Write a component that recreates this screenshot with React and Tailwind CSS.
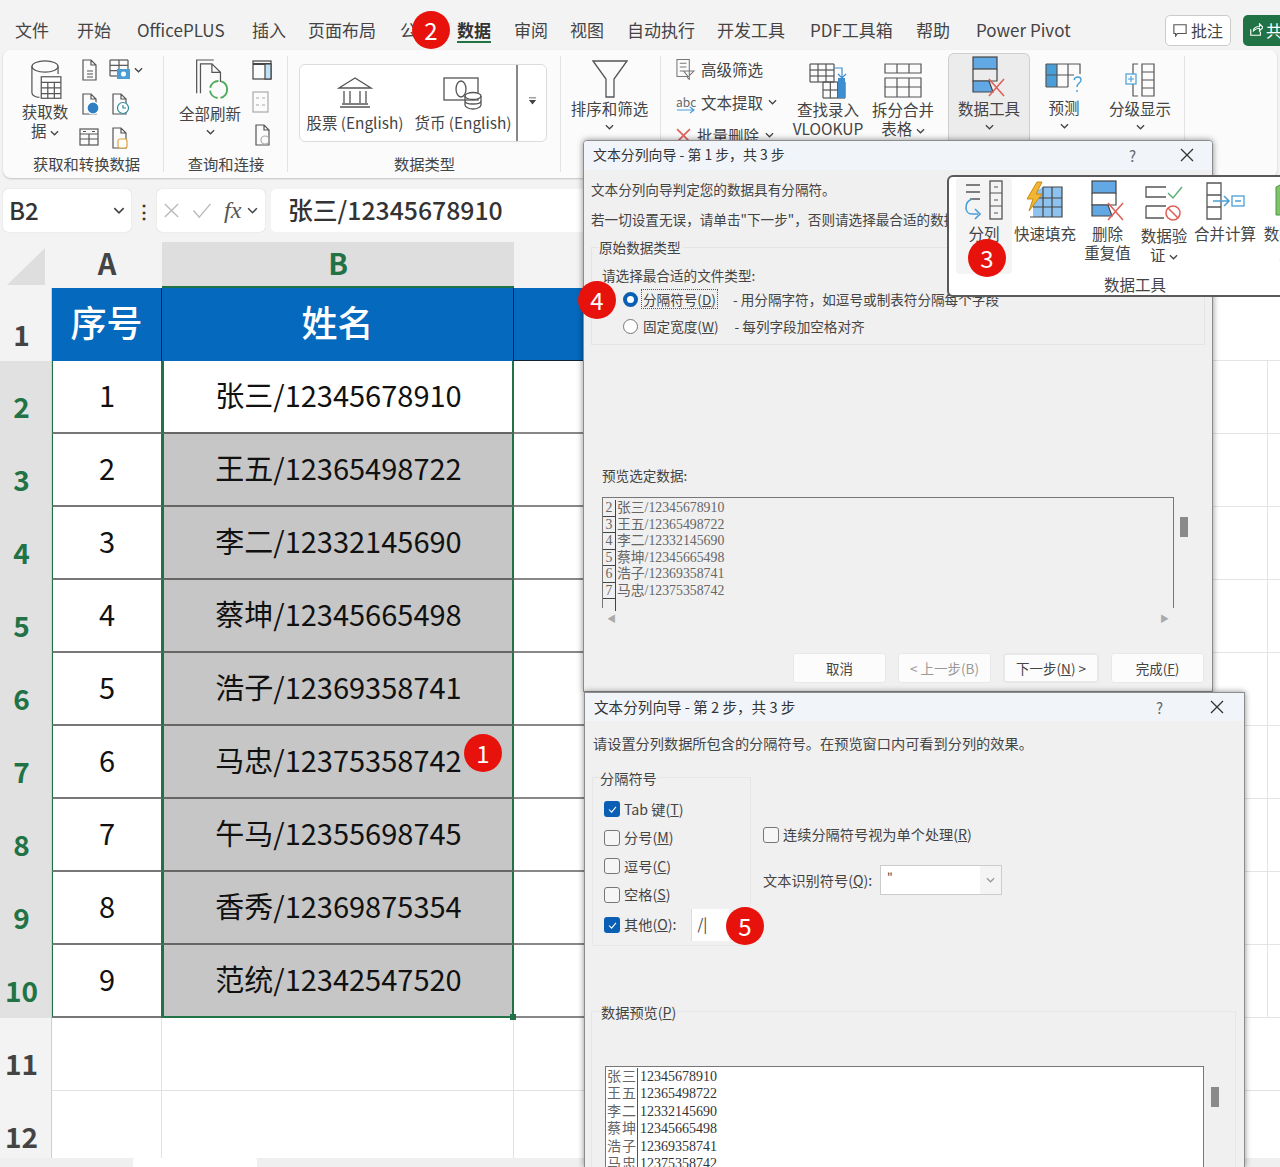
import React from "react";

const tabs = [
  ["文件", "w-[62px]"],
  ["开始", "w-[60px]"],
  ["OfficePLUS", "w-[115px]"],
  ["插入", "w-[56px]"],
  ["页面布局", "w-[92px]"],
  ["公式", "w-[57px]"],
  ["数据", "w-[57px]"],
  ["审阅", "w-[56px]"],
  ["视图", "w-[57px]"],
  ["自动执行", "w-[90px]"],
  ["开发工具", "w-[93px]"],
  ["PDF工具箱", "w-[106px]"],
  ["帮助", "w-[60px]"],
  ["Power Pivot", "w-[110px]"],
];

const people = [
  "张三/12345678910",
  "王五/12365498722",
  "李二/12332145690",
  "蔡坤/12345665498",
  "浩子/12369358741",
  "马忠/12375358742",
  "午马/12355698745",
  "香秀/12369875354",
  "范统/12342547520",
];

const Chev = ({ className = "" }) => (
  <svg viewBox="0 0 10 6" className={`w-[9px] h-[6px] inline-block ${className}`} fill="none" stroke="#444" strokeWidth="1.4">
    <path d="M1 1l4 4 4-4" />
  </svg>
);

const Badge = ({ n, className }) => (
  <div className={`absolute z-30 w-[38px] h-[38px] rounded-full bg-[#e8120c] text-white text-[24px] flex items-center justify-center ${className}`}>
    {n}
  </div>
);

const Doc = ({ children, size = 22 }) => (
  <svg viewBox="0 0 20 22" width={size} height={size} fill="none" stroke="#555" strokeWidth="1.2">
    <path d="M3 1h8l5 5v15H3z M11 1v5h5" />
    {children}
  </svg>
);

const CacheGrid = ({ x, y, w, h, cols, rows, stroke = "#555" }) => {
  const lines = [];
  for (let i = 0; i <= cols; i++) lines.push(<path key={`c${i}`} d={`M${x + (w * i) / cols} ${y}v${h}`} />);
  for (let i = 0; i <= rows; i++) lines.push(<path key={`r${i}`} d={`M${x} ${y + (h * i) / rows}h${w}`} />);
  return <g stroke={stroke} fill="none" strokeWidth="1.2">{lines}</g>;
};

const DeleteIcon = ({ w = 36, h = 42 }) => (
  <svg viewBox="0 0 36 42" width={w} height={h} fill="none">
    <rect x="2" y="1" width="24" height="12" fill="#62a8e5" stroke="#444" strokeWidth="1.2" />
    <path d="M2 13v12h24V13" stroke="#444" strokeWidth="1.2" />
    <path d="M2 25h16l4 11H2z" fill="#62a8e5" stroke="#444" strokeWidth="1.2" />
    <path d="M18 40L33 23M18 23l15 17" stroke="#e0605a" strokeWidth="1.6" />
  </svg>
);

const Group = ({ className = "", caption, captionClass = "", children, line = true }) => (
  <div className={`relative h-full shrink-0 flex flex-col ${className}`}>
    <div className="flex-1 min-h-0">{children}</div>
    {caption && <div className={`h-[27px] text-center text-[15.3px] leading-[24px] ${captionClass}`}>{caption}</div>}
    {line && <div className="absolute right-0 top-[6px] bottom-[6px] w-px bg-[#e3e3e3]" />}
  </div>
);

const BigTool = ({ icon, label, more = true, className = "" }) => (
  <div className={`flex flex-col items-center text-[15.5px] leading-[19px] ${className}`}>
    <div className="h-[46px] flex items-end justify-center">{icon}</div>
    <div className="mt-[1px] text-center whitespace-nowrap">{label}</div>
    {more && <Chev className="mt-[6px]" />}
  </div>
);

const Ribbon = () => (
  <div className="mx-[3px] h-[128px] rounded-[8px] bg-[#fbfbfb] shadow-[0_1px_2px_rgba(0,0,0,0.2)] flex text-[#444]">
    <Group className="w-[161px]" caption="获取和转换数据" captionClass="pl-[6px]">
      <div className="flex pt-[9px] pl-[15px]">
        <div className="w-[54px] flex flex-col items-center text-[15.5px] leading-[19px]">
          <svg viewBox="0 0 40 46" width="38" height="43" fill="none" stroke="#555" strokeWidth="1.3">
            <ellipse cx="20" cy="8" rx="14" ry="6" />
            <path d="M6 8v28c0 3 4 5 8 5M34 8v8" />
            <rect x="16" y="19" width="21" height="23" fill="#fff" />
            <path d="M16 25h21M16 31h21M16 37h21M23 25v17M30 25v17" />
          </svg>
          <div className="text-center whitespace-nowrap">获取数<br />据 <Chev /></div>
        </div>
        <div className="ml-[7px] grid grid-cols-[30px_34px] grid-rows-[34px_34px_30px] items-start justify-items-start">
          <Doc><path d="M7 12h6M7 15h6M7 18h6" /></Doc>
          <div className="flex items-center gap-[3px]">
            <svg viewBox="0 0 22 22" width="22" height="22" fill="none">
              <CacheGrid x={1} y={1} w={18} h={16} cols={2} rows={3} />
              <rect x="8" y="10" width="13" height="10" fill="#4a9ed8" />
              <circle cx="14.5" cy="15" r="2.5" fill="#fff" />
            </svg>
            <Chev />
          </div>
          <Doc><circle cx="13" cy="15" r="6" fill="#2f7fc4" stroke="#fff" /></Doc>
          <Doc><circle cx="13" cy="15" r="5.5" fill="#fff" stroke="#2a8a9a" /><path d="M13 12v3h3" stroke="#2a8a9a" /></Doc>
          <svg viewBox="0 0 20 20" width="20" height="20" fill="none" stroke="#555" strokeWidth="1.2">
            <rect x="1" y="2" width="18" height="16" />
            <path d="M1 7h18M1 12h18M10 7v11" />
            <path d="M4 4.5h3M13 4.5h3" />
          </svg>
          <Doc><rect x="8" y="12" width="9" height="9" rx="2" fill="#fff" stroke="#e0a23c" /></Doc>
        </div>
      </div>
    </Group>
    <Group className="w-[124px]" caption="查询和连接">
      <div className="flex pt-[9px] pl-[14px]">
        <div className="w-[64px] flex flex-col items-center text-[15.5px] leading-[20px]">
          <svg viewBox="0 0 42 44" width="40" height="42" fill="none" stroke="#555" strokeWidth="1.3">
            <path d="M7 36V1h18" />
            <path d="M11 36V5h12l9 9v10M23 5v9h9" />
            <circle cx="30" cy="32" r="9" stroke="#4caa5a" strokeWidth="2" strokeDasharray="12 3" />
          </svg>
          <div className="mt-[2px] whitespace-nowrap">全部刷新</div>
          <Chev className="mt-[6px]" />
        </div>
        <div className="ml-[10px] flex flex-col gap-[11px] pt-[1px]">
          <svg viewBox="0 0 20 20" width="20" height="20" fill="none" stroke="#444" strokeWidth="1.2">
            <rect x="1" y="1" width="18" height="18" />
            <path d="M1 4h18" strokeWidth="2" />
            <rect x="13" y="4" width="6" height="15" fill="#bfe0f5" />
          </svg>
          <svg viewBox="0 0 18 22" width="18" height="22" fill="none" stroke="#aaa" strokeWidth="1.2">
            <rect x="1" y="1" width="15" height="20" />
            <path d="M4 7h3M4 14h3M10 7h3M10 14h3" />
          </svg>
          <Doc><circle cx="12" cy="16" r="4" stroke="#aaa" /></Doc>
        </div>
      </div>
    </Group>
    <Group className="w-[273px]" caption="数据类型">
      <div className="mt-[14px] ml-[11px] w-[248px] h-[78px] rounded-[6px] border border-[#dcdcdc] bg-white flex text-[15.4px] leading-[20px]">
        <div className="w-[110px] shrink-0 flex flex-col items-center pt-[12px]">
          <svg viewBox="0 0 36 32" width="36" height="32" fill="none" stroke="#555" strokeWidth="1.3">
            <path d="M18 1L2 11h32z" />
            <path d="M7 14v12M13 14v12M23 14v12M29 14v12M3 30h30M5 27h26" />
          </svg>
          <span className="mt-[3px] whitespace-nowrap">股票 (English)</span>
        </div>
        <div className="w-[106px] shrink-0 flex flex-col items-center pt-[11px]">
          <svg viewBox="0 0 40 34" width="40" height="34" fill="none" stroke="#555" strokeWidth="1.3">
            <rect x="1" y="2" width="34" height="22" />
            <ellipse cx="18" cy="13" rx="5" ry="8" />
            <ellipse cx="30" cy="20" rx="8" ry="3.5" fill="#fff" />
            <path d="M22 20v9c0 2 4 4 8 4s8-2 8-4v-9M22 25c0 2 4 3 8 3s8-1 8-3" />
          </svg>
          <span className="mt-[2px] whitespace-nowrap">货币 (English)</span>
        </div>
        <div className="flex-1 border-l-2 border-[#888] flex items-center justify-center pb-[4px]">
          <svg viewBox="0 0 10 8" width="9" height="8" fill="#444"><path d="M1 0h8v1H1zM1 3h8L5 8z" /></svg>
        </div>
      </div>
    </Group>
    <Group className="w-[100px]">
      <BigTool
        className="pt-[2px] mr-[3px]"
        label="排序和筛选"
        icon={
          <svg viewBox="0 0 36 38" width="36" height="38" fill="none" stroke="#555" strokeWidth="1.3">
            <path d="M1 1h34L22 19v18h-8V19z" />
          </svg>
        }
      />
    </Group>
    <Group className="w-[130px]" line={false}>
      <div className="pt-[8px] pl-[15px] flex flex-col gap-[11px] text-[15.5px] leading-[22px]">
        <div className="flex items-center gap-[6px]">
          <svg viewBox="0 0 20 22" width="19" height="22" fill="none" stroke="#777" strokeWidth="1.1">
            <path d="M1 1h13v18H1zM4 5h7M4 9h7M4 13h4M8 13h11l-5 5v4l-2-2v-2z" />
          </svg>
          高级筛选
        </div>
        <div className="flex items-center gap-[5px]">
          <span className="relative w-[20px] text-[12px] leading-[14px] text-[#666]">
            abc
            <svg viewBox="0 0 20 8" width="20" height="8" className="absolute left-0 top-[11px]" fill="none" stroke="#4a9ed8" strokeWidth="1.2"><path d="M1 4h17M14 1l4 3-4 3" /></svg>
          </span>
          文本提取 <Chev />
        </div>
        <div className="flex items-center gap-[6px]">
          <svg viewBox="0 0 14 14" width="15" height="15" stroke="#e0605a" strokeWidth="1.5"><path d="M1 1l12 12M13 1L1 13" /></svg>
          批量删除 <Chev />
        </div>
      </div>
    </Group>
    <Group className="w-[74px]" line={false}>
      <BigTool
        className="pt-[3px]"
        more={false}
        label={<>查找录入<br />VLOOKUP</>}
        icon={
          <svg viewBox="0 0 38 36" width="38" height="36" fill="none">
            <CacheGrid x={1} y={1} w={24} h={18} cols={3} rows={3} />
            <CacheGrid x={14} y={19} w={22} h={16} cols={3} rows={2} />
            <rect x="29" y="15" width="7" height="20" fill="#3d8ed0" />
            <path d="M25 5h8v10M29 11l4 4 4-4" stroke="#3d8ed0" strokeWidth="1.2" />
          </svg>
        }
      />
    </Group>
    <Group className="w-[76px] mr-[7px]" line={false}>
      <BigTool
        className="pt-[3px]"
        more={false}
        label={<>拆分合并<br />表格 <Chev /></>}
        icon={
          <svg viewBox="0 0 38 36" width="38" height="36" fill="none" stroke="#555" strokeWidth="1.2">
            <path d="M1 1h36v9H1zM13 1v9M25 1v9M1 15h36v19H1zM1 24h36M13 15v19M25 15v19" />
          </svg>
        }
      />
    </Group>
    <Group className="w-[82px]" line={false}>
      <div className="h-[88px] mt-[3px] rounded-t-[6px] bg-[#ececec] border border-b-0 border-[#cfcfcf]">
        <BigTool className="-mt-[2px]" label="数据工具" icon={<DeleteIcon />} />
      </div>
    </Group>
    <Group className="w-[68px]" line={false}>
      <BigTool
        className="pt-[2px] mt-[-1px]"
        label="预测"
        icon={
          <svg viewBox="0 0 38 36" width="38" height="36" fill="none">
            <rect x="1" y="3" width="11" height="11" fill="#4a9ed8" />
            <rect x="1" y="14" width="11" height="12" fill="#4a9ed8" />
            <path d="M1 3h34v10M1 14h28M1 26h22M12 3v23M23 3v23M1 3v23" stroke="#555" strokeWidth="1.2" />
            <path d="M29 19c1-4 7-4 7 0 0 3-4 3-4 7M32 29v2" stroke="#4a9ed8" strokeWidth="1.4" />
          </svg>
        }
      />
    </Group>
    <Group className="w-[87px]">
      <BigTool
        className="pt-[2px] pr-[3px]"
        label="分级显示"
        icon={
          <svg viewBox="0 0 32 36" width="32" height="36" fill="none" stroke="#555" strokeWidth="1.2">
            <path d="M18 2h12v32H18zM18 10h12M18 18h12M18 26h12M14 2H9v10M14 34H9V22" />
            <rect x="2" y="12" width="10" height="10" stroke="#4a9ed8" />
            <path d="M4 17h6M7 14v6" stroke="#4a9ed8" />
          </svg>
        }
      />
    </Group>
  </div>
);

const FormulaBar = () => (
  <div className="mt-[10px] h-[44px] flex items-center pl-[3px] text-[#333]">
    <div className="w-[128px] h-[43px] rounded-[5px] bg-white flex items-center justify-between px-[6px] pr-[5px] shadow-[0_0_1px_rgba(0,0,0,0.25)]">
      <span className="text-[24px] font-medium">B2</span>
      <Chev className="w-[12px] h-[7px] mr-[1px]" />
    </div>
    <span className="w-[26px] text-center text-[18px] font-bold leading-none">⋮</span>
    <div className="w-[108px] h-[43px] rounded-[5px] bg-white flex items-center pl-[6px] gap-[11px] shadow-[0_0_1px_rgba(0,0,0,0.25)]">
      <svg viewBox="0 0 18 18" width="17" height="17" stroke="#bbb" strokeWidth="1.5"><path d="M2 2l14 14M16 2L2 16" /></svg>
      <svg viewBox="0 0 20 18" width="22" height="17" fill="none" stroke="#bbb" strokeWidth="1.5"><path d="M1 9l6 7L19 2" /></svg>
      <span className="font-['Liberation_Serif',serif] italic text-[24px] leading-none text-[#555]">fx</span>
      <Chev className="w-[11px] h-[7px] -ml-[5px]" />
    </div>
    <div className="ml-[6px] flex-1 h-[43px] rounded-[5px] bg-white pl-[17px] text-[24.8px] font-medium leading-[41px]">
      张三/12345678910
    </div>
  </div>
);

const RowHead = ({ n, active, className = "pb-[8px]" }) => (
  <div className={`flex items-end justify-center pr-[8px] text-[28px] leading-[40px] font-semibold border-r border-[#cfcfcf] ${className} ${active ? "bg-[#e1e1e1] text-[#217346]" : "text-[#444]"}`}>
    {n}
  </div>
);

const Sheet = () => (
  <div className="mt-[10px] grid grid-cols-[52px_110px_352px_286px_468px_12px] grid-rows-[46px_repeat(10,73px)_73px_67px] text-[#111]">
    <div className="flex items-end justify-center pb-[3px]">
      <div className="w-[38px] h-[37px] bg-[#dedede] [clip-path:polygon(100%_0,100%_100%,0_100%)]" />
    </div>
    <div className="text-[29px] font-semibold text-[#444] text-center leading-[40px]">A</div>
    <div className="text-[29px] font-semibold text-[#217346] text-center leading-[40px] bg-[#dedede] border-b-2 border-[#217346]">B</div>
    <div className="col-span-3" />

    <RowHead n={1} className="pb-[7px]" />
    <div className="bg-[#0569bd] text-white text-[36px] font-medium text-center leading-[66px] border-r border-[#123]">序号</div>
    <div className="bg-[#0569bd] text-white text-[36px] font-medium text-center leading-[66px] border-r border-[#123]">姓名</div>
    <div className="bg-[#0569bd] border-b border-[#123]" />
    <div className="border-b border-[#e4e4e4] col-span-2 bg-white" />

    {people.map((name, i) => (
      <React.Fragment key={name}>
        <RowHead n={i + 2} active />
        <div className="bg-white border-b-2 border-x border-x-[#217346] border-b-[#777] text-[29px] text-center leading-[66px]">{i + 1}</div>
        <div className={`relative pl-[1px] border-x-2 border-[#217346] border-b-2 ${i === 8 ? "border-b-[#217346]" : "border-b-[#666]"} ${i === 0 ? "bg-white" : "bg-[#c6c6c6]"} text-[29px] text-center leading-[66px]`}>
          {name}
          {i === 8 && <span className="absolute -right-[4px] -bottom-[4px] w-[6px] h-[6px] bg-[#217346]" />}
        </div>
        <div className="bg-white border-b-2 border-[#888]" />
        <div className="bg-white border-b border-[#e4e4e4] border-r" />
        <div className="bg-white border-b border-[#e4e4e4]" />
      </React.Fragment>
    ))}

    <RowHead n={11} />
    <div className="bg-white border-b border-r border-[#e2e2e2]" />
    <div className="bg-white border-b border-r border-[#e2e2e2]" />
    <div className="bg-white border-b border-[#e2e2e2] col-span-2" />
    <div className="bg-white border-b border-[#e2e2e2]" />
    <RowHead n={12} className="pb-[2px]" />
    <div className="bg-white border-r border-[#e2e2e2]" />
    <div className="bg-white border-r border-[#e2e2e2]" />
    <div className="bg-white col-span-3" />
  </div>
);

const DialogTitle = ({ text, gap, className, closeGap }) => (
  <div className={`bg-[#f1f5fa] flex items-center pl-[9px] text-[#333] leading-none ${className}`}>
    <span className="flex-1">{text}</span>
    <span className={`text-[15px] text-[#666] ${gap}`}>?</span>
    <svg viewBox="0 0 14 14" width="14" height="14" className={closeGap} stroke="#333" strokeWidth="1.3"><path d="M1 1l12 12M13 1L1 13" /></svg>
  </div>
);

const DlgBtn = ({ children, className = "" }) => (
  <div className={`h-[30px] rounded-[3px] bg-[#fcfcfc] border border-[#e8e8e8] flex items-center justify-center text-[13.5px] ${className}`}>{children}</div>
);

const previewRows = ["张三/12345678910", "王五/12365498722", "李二/12332145690", "蔡坤/12345665498", "浩子/12369358741", "马忠/12375358742"];

const FirstDialog = () => (
  <div className="absolute z-10 left-[583px] top-[140px] w-[630px] h-[552px] bg-[#f0f0f0] rounded-t-[4px] border border-[#8c8c8c] shadow-[0_0_6px_rgba(0,0,0,0.45)] text-[13.6px] text-[#444] overflow-hidden">
    <DialogTitle text="文本分列向导 - 第 1 步，共 3 步" gap="mr-[44px]" closeGap="mr-[18px]" className="h-[29px] pb-[1px] mb-[2px] text-[13.9px]" />
    <div className="pl-[7px] pt-[7px] leading-[20px]">文本分列向导判定您的数据具有分隔符。</div>
    <div className="pl-[7px] pt-[10px] leading-[20px]">若一切设置无误，请单击"下一步"，否则请选择最合适的数据类型。</div>
    <div className="relative mt-[18px] ml-[7px] w-[614px] h-[98px] border border-[#e4e4e4] pt-[17px] pl-[10px]">
      <span className="absolute left-[7px] -top-[11px] bg-[#f0f0f0] pr-[2px] leading-[20px]">原始数据类型</span>
      <div className="leading-[20px]">请选择最合适的文件类型:</div>
      <div className="flex items-center mt-[4px] ml-[21px] h-[20px]">
        <span className="w-[15px] h-[15px] rounded-full border-[4px] border-[#0a5fb4] bg-white" />
        <span className="ml-[3px] border border-dotted border-[#555] px-[1px] leading-[18px]">分隔符号(<u>D</u>)</span>
        <span className="ml-[15px]">- 用分隔字符，如逗号或制表符分隔每个字段</span>
      </div>
      <div className="flex items-center mt-[7px] ml-[21px] h-[20px]">
        <span className="w-[15px] h-[15px] rounded-full border border-[#777] bg-white" />
        <span className="ml-[4px] px-[1px]">固定宽度(<u>W</u>)</span>
        <span className="ml-[15px]">- 每列字段加空格对齐</span>
      </div>
    </div>
    <div className="mt-[120px] ml-[18px] leading-[20px]">预览选定数据:</div>
    <div className="relative mt-[12px] ml-[18px] w-[572px] h-[111px] border-x border-t border-[#777] font-['Liberation_Serif','Noto_Sans_CJK_SC',serif] text-[13.8px] leading-[16.5px] text-[#666] pt-[2px]">
      {previewRows.map((row, i) => (
        <div key={row} className="flex h-[16.5px]">
          <span className="w-[13px] text-center border-r border-b border-[#444]">{i + 2}</span>
          <span className="pl-[1px]">{row}</span>
        </div>
      ))}
      <div className="w-[13px] h-[12px] border-r border-[#444]" />
      <span className="absolute -right-[15px] top-[19px] w-[8px] h-[20px] bg-[#8a8a8a]" />
    </div>
    <div className="ml-[18px] w-[572px] flex justify-between px-[5px] pt-[4px] text-[9px] text-[#aaa]">
      <span>◀</span>
      <span>▶</span>
    </div>
    <div className="absolute left-[209px] bottom-[8px] flex gap-[12px]">
      <DlgBtn className="w-[93px]">取消</DlgBtn>
      <DlgBtn className="w-[93px] text-[#999]">&lt; 上一步(B)</DlgBtn>
      <DlgBtn className="w-[96px] border-[#6ea3c7] border-2">下一步(<u>N</u>) &gt;</DlgBtn>
      <DlgBtn className="w-[93px]">完成(<u>F</u>)</DlgBtn>
    </div>
  </div>
);

const Check = ({ on }) => (
  <span className={`w-[16px] h-[16px] shrink-0 rounded-[3px] flex items-center justify-center ${on ? "bg-[#0a5fb4]" : "bg-[#f6f6f6] border border-[#777]"}`}>
    {on && (
      <svg viewBox="0 0 10 8" width="9" height="7" fill="none" stroke="#fff" strokeWidth="1.2"><path d="M1 4l3 3 5-6" /></svg>
    )}
  </span>
);

const CheckRow = ({ on, children }) => (
  <div className="h-[28.5px] flex items-center gap-[4px]">
    <Check on={on} />
    <span>{children}</span>
  </div>
);

const SecondDialog = () => (
  <div className="absolute z-20 left-[584px] top-[692px] w-[661px] h-[475px] bg-[#f0f0f0] border-x border-t border-[#8c8c8c] shadow-[0_0_6px_rgba(0,0,0,0.45)] text-[14.2px] text-[#444] overflow-hidden">
    <DialogTitle text="文本分列向导 - 第 2 步，共 3 步" gap="mr-[47px]" closeGap="mr-[20px]" className="h-[28px] text-[14.6px]" />
    <div className="pl-[8px] pt-[12px] leading-[20px]">请设置分列数据所包含的分隔符号。在预览窗口内可看到分列的效果。</div>
    <div className="flex mt-[24px]">
      <div className="relative ml-[7px] w-[159px] h-[169px] border border-[#e6e6e6] pt-[17px] pl-[11px]">
        <span className="absolute left-[7px] -top-[10px] bg-[#f0f0f0] pr-[1px] leading-[20px]">分隔符号</span>
        <CheckRow on>Tab 键(<u>T</u>)</CheckRow>
        <CheckRow>分号(<u>M</u>)</CheckRow>
        <CheckRow>逗号(<u>C</u>)</CheckRow>
        <CheckRow>空格(<u>S</u>)</CheckRow>
        <div className="h-[32px] flex items-center gap-[4px]">
          <Check on />
          <span>其他(<u>O</u>):</span>
          <span className="ml-[11px] w-[38px] h-[32px] bg-white text-[15px] pl-[5px] leading-[30px] border-l border-[#ddd]">/|</span>
        </div>
      </div>
      <div className="ml-[12px] pt-[47px]">
        <div className="flex items-center gap-[4px]">
          <Check />
          <span>连续分隔符号视为单个处理(<u>R</u>)</span>
        </div>
        <div className="flex items-center mt-[20px]">
          <span className="w-[117px] whitespace-nowrap">文本识别符号(<u>Q</u>):</span>
          <div className="w-[122px] h-[30px] bg-white border border-[#ccc] flex">
            <span className="flex-1 pl-[6px] text-[12px] leading-[22px]">"</span>
            <span className="w-[21px] flex items-center justify-center bg-[#f4f4f4]"><Chev className="opacity-50" /></span>
          </div>
        </div>
      </div>
    </div>
    <div className="relative mt-[65px] ml-[6px] w-[645px] h-[160px] border border-[#e6e6e6]">
      <span className="absolute left-[9px] -top-[10px] bg-[#f0f0f0] pr-[1px] leading-[20px]">数据预览(<u>P</u>)</span>
      <div className="absolute left-[13px] top-[54px] w-[599px] h-[108px] pt-[1px] bg-white border border-[#777] font-['Liberation_Serif','Noto_Sans_CJK_SC',serif] text-[14px] text-[#666]">
        {previewRows.map((row) => {
          const [name, phone] = row.split("/");
          return (
            <div key={row} className="flex h-[17.4px] leading-[17.4px]">
              <span className="w-[32px] pl-[1px] tracking-[1px] border-r border-[#555] whitespace-nowrap">{name}</span>
              <span className="pl-[2px] text-[#333]">{phone}</span>
            </div>
          );
        })}
      </div>
      <span className="absolute left-[619px] top-[75px] w-[8px] h-[20px] bg-[#8a8a8a]" />
    </div>
  </div>
);

const PopTool = ({ className = "", icon, children }) => (
  <div className={`shrink-0 flex flex-col items-center text-[15.5px] leading-[19px] ${className}`}>
    <div className="h-[46px] flex items-center justify-center">{icon}</div>
    <div className="text-center whitespace-nowrap">{children}</div>
  </div>
);

const ToolsPopup = () => (
  <div className="absolute z-20 left-[947px] top-[175px] w-[360px] h-[122px] bg-white border-2 border-[#5a5a5a] rounded-[6px] pl-[7px] pt-[1px] text-[#444] overflow-hidden">
    <div className="flex h-[96px]">
      <PopTool className="w-[56px] bg-[#f4f4f4] rounded-[3px]" icon={
        <svg viewBox="0 0 40 42" width="40" height="42" fill="none">
          <path d="M2 5h14M2 12h14M6 19h10" stroke="#555" strokeWidth="1.3" />
          <rect x="26" y="1" width="12" height="38" stroke="#555" strokeWidth="1.3" />
          <path d="M26 13h12M26 26h12M30 7h4M30 20h4M30 33h4" stroke="#555" strokeWidth="1.2" />
          <path d="M8 19c-8 3-8 15 0 15h6M11 29l5 5-5 5" stroke="#4a9ed8" strokeWidth="1.6" />
        </svg>
      }>分列</PopTool>
      <PopTool className="w-[66px]" icon={
        <svg viewBox="0 0 40 40" width="40" height="40" fill="none">
          <path d="M8 12L18 6h19v30H8z" fill="#8ec3ef" />
          <path d="M18 6h19v30H5M8 17h29M8 26h29M18 6v30M27 6v30" stroke="#444" strokeWidth="1.2" />
          <path d="M12 1L2 18h6L4 30l13-17h-6l6-12z" fill="#f2b632" stroke="#c98a10" />
        </svg>
      }>快速填充</PopTool>
      <PopTool className="w-[59px]" icon={<DeleteIcon />}>删除<br />重复值</PopTool>
      <PopTool className="w-[54px] pt-[2px]" icon={
        <svg viewBox="0 0 40 38" width="40" height="38" fill="none">
          <path d="M22 3H2v10h20M2 22h20M2 22v12h18" stroke="#555" strokeWidth="1.3" />
          <path d="M24 9l5 5 9-11" stroke="#5cb07a" strokeWidth="1.5" />
          <circle cx="29" cy="29" r="7" stroke="#e0605a" strokeWidth="1.6" />
          <path d="M24 24l10 10" stroke="#e0605a" strokeWidth="1.6" />
        </svg>
      }>数据验<br />证 <Chev /></PopTool>
      <PopTool className="w-[68px]" icon={
        <svg viewBox="0 0 40 38" width="40" height="38" fill="none" stroke="#555" strokeWidth="1.3">
          <path d="M2 1h14v36H2zM2 13h14M2 25h14" />
          <path d="M8 19h15M19 14l5 5-5 5" stroke="#4a9ed8" strokeWidth="1.5" />
          <rect x="27" y="14" width="12" height="10" stroke="#4a9ed8" />
          <path d="M30 19h6" stroke="#4a9ed8" />
        </svg>
      }>合并计算</PopTool>
      <PopTool className="w-[56px]" icon={
        <svg viewBox="0 0 26 38" width="26" height="38" fill="none">
          <path d="M2 5l8-4h14v32H2z" fill="#7fc36b" stroke="#4d9a3e" />
          <rect x="7" y="10" width="12" height="16" fill="#fff" stroke="#4d9a3e" />
        </svg>
      }>数据模<br />型</PopTool>
    </div>
    <div className="w-[358px] text-center text-[15.5px] leading-[20px]">数据工具</div>
  </div>
);

const TopTabs = () => (
  <div className="h-[50px] flex items-center pl-[15px] pt-[10px] text-[17px] text-[#444]">
    {tabs.map(([t, w]) => (
      <div key={t} className={`relative shrink-0 whitespace-nowrap ${w} ${t === "数据" ? "font-bold text-[#333]" : ""}`}>
        {t}
        {t === "数据" && <span className="absolute left-0 w-[34px] bottom-[0px] h-[2px] bg-[#217346]" />}
      </div>
    ))}
    <div className="ml-auto flex items-center gap-[12px] -mr-[23px] shrink-0">
      <div className="w-[66px] h-[31px] rounded-[5px] border border-[#ccc] bg-white flex items-center justify-center gap-[4px] text-[16px]">
        <svg viewBox="0 0 16 16" width="14" height="14" fill="none" stroke="#555" strokeWidth="1.3"><path d="M1 2h14v10H5l-2 3v-3H1z" /></svg>
        批注
      </div>
      <div className="w-[60px] h-[31px] rounded-[5px] bg-[#217346] text-white flex items-center pl-[6px] gap-[3px] text-[16px]">
        <svg viewBox="0 0 16 16" width="14" height="14" fill="none" stroke="#fff" strokeWidth="1.3"><path d="M2 7v7h11v-4M5 9c0-3 3-5 7-5V1l4 4-4 4V6c-3 0-5 1-7 3z" /></svg>
        共享
      </div>
    </div>
  </div>
);

export default function App() {
  return (
    <div className="relative w-[1280px] h-[1167px] overflow-hidden bg-[#f3f3f3] font-['Noto_Sans_CJK_SC','Noto_Sans',sans-serif]">
      <TopTabs />
      <Ribbon />
      <FormulaBar />
      <Sheet />
      <div className="flex h-[9px] bg-[#efefef]">
        <div className="ml-[133px] w-[124px] bg-white rounded-t-[2px]" />
      </div>

      <FirstDialog />
      <SecondDialog />
      <ToolsPopup />

      <Badge n={1} className="left-[464px] top-[734px]" />
      <Badge n={2} className="left-[412px] top-[11px]" />
      <Badge n={3} className="left-[968px] top-[239px]" />
      <Badge n={4} className="left-[578px] top-[281px]" />
      <Badge n={5} className="left-[726px] top-[907px]" />
    </div>
  );
}
